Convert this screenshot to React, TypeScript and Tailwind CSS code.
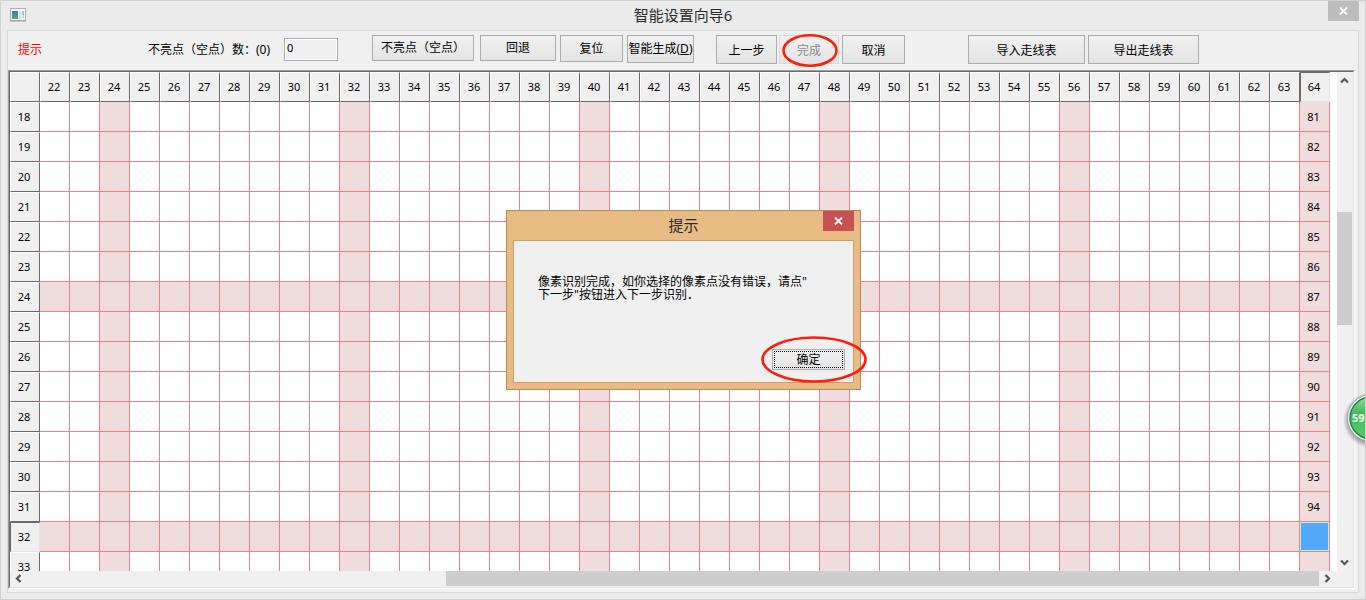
import React from "react";

const columns = Array.from({ length: 43 }, (_, i) => i + 22);
const rows = Array.from({ length: 16 }, (_, i) => i + 18);

const buttonBase =
  "shrink-0 border text-[12px] leading-4 whitespace-nowrap bg-linear-to-b from-[#f1f1f1] to-[#e4e4e4]";
const buttonOn = "border-[#acacac] text-black";

function Chevron({ d, label, className }: { d: string; label: string; className: string }) {
  return (
    <button type="button" aria-label={label} className={`flex items-center justify-center ${className}`}>
      <svg width="9" height="9" viewBox="0 0 9 9" fill="none" stroke="#555" strokeWidth="2.2">
        <path d={d} />
      </svg>
    </button>
  );
}

function WindowIcon() {
  return (
    <svg width="16" height="14" viewBox="0 0 16 14" aria-hidden="true">
      <defs>
        <linearGradient id="pane" x1="0" y1="0" x2="0" y2="1">
          <stop offset="0" stopColor="#3f7fae" />
          <stop offset="1" stopColor="#55a877" />
        </linearGradient>
      </defs>
      <rect x="0.5" y="0.5" width="15" height="12" fill="#f6f7f7" stroke="#aab2b4" />
      <rect x="0" y="12" width="16" height="1.5" fill="#9da5a7" />
      <rect x="2" y="3" width="6" height="8" fill="url(#pane)" />
      <rect x="9" y="3" width="2" height="8" fill="#dcdfe1" />
      <rect x="12" y="3" width="2" height="4" fill="#9fc0dc" />
      <rect x="12" y="7" width="2" height="3" fill="#bfe0cb" />
    </svg>
  );
}

function CloseMark() {
  return (
    <svg width="9" height="8" viewBox="0 0 9 8" stroke="#fff" strokeWidth="1.8" aria-hidden="true">
      <path d="M1 0.5L8 7.5M8 0.5L1 7.5" />
    </svg>
  );
}

function Toolbar() {
  return (
    <div className="flex h-[39px] shrink-0 items-start pt-1 pl-2.5">
      <span className="w-[130px] shrink-0 pt-[7px] text-[12px] leading-4 text-[#ff0000]">提示</span>
      <label htmlFor="dead-count" className="w-[136px] shrink-0 whitespace-nowrap pt-[7px] text-[12px] leading-4">
        不亮点（空点）数：(0)
      </label>
      <input
        id="dead-count"
        defaultValue="0"
        className="mt-[3px] h-[23px] w-[54px] shrink-0 border border-[#abadb3] bg-[#f0f0f0] px-0.5 pb-1 text-[11px] outline-1 -outline-offset-2 outline-white"
      />
      <button type="button" className={`${buttonBase} ${buttonOn} ml-[34px] h-[26px] w-[102px]`}>不亮点（空点）</button>
      <button type="button" className={`${buttonBase} ${buttonOn} ml-1.5 h-[26px] w-[76px]`}>回退</button>
      <button type="button" className={`${buttonBase} ${buttonOn} ml-1 h-[27px] w-[63px]`}>复位</button>
      <button type="button" className={`${buttonBase} ${buttonOn} ml-1 h-7 w-[67px]`}>智能生成(<u>D</u>)</button>
      <button type="button" className={`${buttonBase} ${buttonOn} ml-[22px] h-[29px] w-[61px] pt-0.5`}>上一步</button>
      <div className="relative ml-0.5 shrink-0">
        <button type="button" disabled className={`${buttonBase} h-[29px] w-[60px] border-[#dadada] pt-0.5 text-[#8a8a8a]`}>完成</button>
        <svg className="pointer-events-none absolute -top-px left-[3px]" width="57" height="34" viewBox="0 0 57 34" fill="none">
          <ellipse cx="28" cy="16.5" rx="26.5" ry="15.2" stroke="#fb1f0e" strokeWidth="2.6" />
        </svg>
      </div>
      <button type="button" className={`${buttonBase} ${buttonOn} ml-[3px] h-[29px] w-[63px] pt-0.5`}>取消</button>
      <button type="button" className={`${buttonBase} ${buttonOn} ml-[63px] h-[29px] w-[117px] pt-0.5`}>导入走线表</button>
      <button type="button" className={`${buttonBase} ${buttonOn} ml-[3px] h-[29px] w-[111px] pt-0.5`}>导出走线表</button>
    </div>
  );
}

function PixelGrid() {
  const head = "h-[30px] w-[30px] py-0 pl-0 pr-0.5 font-normal bg-[#f0f0f0]";
  const raised = "border-t border-l border-t-white border-l-white border-r border-b border-r-[#696969] border-b-[#696969]";
  const sunken = "border-t border-l border-t-[#696969] border-l-[#696969] border-r border-b border-r-[#e3e3e3] border-b-[#e3e3e3]";
  return (
    <table className="w-[1320px] table-fixed border-separate border-spacing-0 text-center text-[11px] leading-4">
      <thead>
        <tr>
          <td className={`${head} ${raised}`} />
          {columns.map((c) => (
            <th key={c} scope="col" className={`${head} ${c === 64 ? sunken : raised}`}>{c}</th>
          ))}
        </tr>
      </thead>
      <tbody>
        {rows.map((r) => (
          <tr key={r}>
            <th scope="row" className={`${head} ${r === 32 ? sunken : raised}`}>{r}</th>
            {columns.map((c) => {
              if (r === 32 && c === 64) {
                return (
                  <td key={c} className="h-[30px] border-r border-b border-[#f08080] bg-[#53a9fa] p-0 shadow-[inset_0_0_0_1px_#b4f4f0]" />
                );
              }
              const shaded = r % 8 === 0 || c % 8 === 0;
              return (
                <td key={c} className={`h-[30px] border-r border-b border-[#f08080] py-0 pl-0 pr-0.5 ${shaded ? "bg-[#f0dcdd]" : "bg-white"}`}>
                  {c === 64 && r < 32 ? r + 63 : ""}
                </td>
              );
            })}
          </tr>
        ))}
      </tbody>
    </table>
  );
}

function MessageDialog() {
  return (
    <div role="dialog" aria-labelledby="dialog-title" className="absolute top-[209px] left-1/2 -ml-[177px] flex h-[180px] w-[355px] flex-col border border-[#b18d5c] bg-[#e8bb84] px-1.5 pb-1.5">
      <div className="relative flex h-[29px] shrink-0 items-center justify-center pb-0.5">
        <h2 id="dialog-title" className="text-[15px] leading-5 text-[#2b2b2b]">提示</h2>
        <button type="button" aria-label="关闭" className="absolute top-0 right-0 flex h-5 w-[31px] items-center justify-center bg-[#c75050]">
          <CloseMark />
        </button>
      </div>
      <div className="flex flex-1 flex-col border border-[#c9a06c] bg-[#f0f0f0] pt-[34px] pr-2 pb-3 pl-6">
        <p className="text-[12px] leading-[13px]">
          像素识别完成，如你选择的像素点没有错误，请点"
          <br />
          下一步"按钮进入下一步识别．
        </p>
        <div className="relative mt-auto self-end">
          <button type="button" className="h-[21px] w-[73px] border border-[#acacac] bg-linear-to-b from-[#f1f1f1] to-[#e4e4e4] p-px text-[12px] leading-4">
            <span className="flex h-full items-center justify-center border border-dotted border-black">确定</span>
          </button>
          <svg className="pointer-events-none absolute -top-[11px] -left-3" width="108" height="48" viewBox="0 0 108 48" fill="none">
            <ellipse cx="54" cy="24.5" rx="51.5" ry="22" stroke="#fb1f0e" strokeWidth="2.6" />
          </svg>
        </div>
      </div>
    </div>
  );
}

function SpeedBadge() {
  return (
    <div className="absolute top-[388px] -right-px h-[60px] w-6 overflow-hidden">
      <svg width="60" height="60" viewBox="0 0 60 60">
        <defs>
          <linearGradient id="ball" x1="0" y1="0" x2="0" y2="1">
            <stop offset="0" stopColor="#8be09a" />
            <stop offset="0.4" stopColor="#3fba58" />
            <stop offset="1" stopColor="#4dd465" />
          </linearGradient>
          <radialGradient id="shade">
            <stop offset="0.78" stopColor="#000" stopOpacity="0.35" />
            <stop offset="1" stopColor="#000" stopOpacity="0" />
          </radialGradient>
        </defs>
        <circle cx="29" cy="31" r="28" fill="url(#shade)" />
        <circle cx="29" cy="29" r="23.5" fill="#f4f4f4" stroke="#a5a5a5" />
        <circle cx="29" cy="29" r="21" fill="url(#ball)" stroke="#178344" strokeWidth="1.4" />
        <text x="10" y="33" fill="#fff" className="text-[11px] font-bold">59</text>
      </svg>
    </div>
  );
}

export default function App() {
  return (
    <div className="relative flex h-screen min-h-[500px] flex-col overflow-hidden border border-[#d0d0d0] bg-[#ebebeb] px-1.5 pb-1.5 font-['Noto_Sans','Noto_Sans_CJK_SC',sans-serif] text-black">
      <header className="relative flex h-[29px] shrink-0 items-center justify-center pb-0.5">
        <span className="absolute top-[7px] left-[3px]"><WindowIcon /></span>
        <h1 className="text-[15px] leading-5 text-[#2b2b2b]">智能设置向导6</h1>
        <button type="button" aria-label="关闭窗口" className="absolute top-0 right-0 flex h-5 w-[31px] items-center justify-center bg-[#bcbcbc]">
          <CloseMark />
        </button>
      </header>
      <main className="flex min-h-0 flex-1 flex-col border border-[#d9d9d9] bg-[#f0f0f0] pr-[3px] pb-[3px]">
        <Toolbar />
        <section className="flex min-h-0 flex-1 flex-col border border-t-[#a0a0a0] border-r-white border-b-white border-l-[#a0a0a0]">
          <div className="flex min-h-0 flex-1 flex-col border border-t-[#696969] border-r-[#e3e3e3] border-b-[#e3e3e3] border-l-[#696969]">
            <div className="flex min-h-0 flex-1">
              <div className="min-w-0 flex-1 overflow-hidden bg-white">
                <PixelGrid />
              </div>
              <div className="flex w-4 shrink-0 flex-col items-stretch bg-[#f0f0f0] pr-px">
                <Chevron label="向上滚动" d="M1 6.5L4.5 3L8 6.5" className="h-[17px]" />
                <div className="flex flex-1 flex-col">
                  <div className="basis-[26.5%]" />
                  <div className="basis-[24.3%] bg-[#cdcdcd]" />
                </div>
                <Chevron label="向下滚动" d="M1 2.5L4.5 6L8 2.5" className="h-[17px]" />
              </div>
            </div>
            <div className="flex h-4 shrink-0 bg-[#f0f0f0] pr-[17px] pb-px">
              <Chevron label="向左滚动" d="M6.5 1L3 4.5L6.5 8" className="w-[17px]" />
              <div className="flex flex-1 justify-end">
                <div className="w-[67.6%] bg-[#cdcdcd]" />
              </div>
              <Chevron label="向右滚动" d="M2.5 1L6 4.5L2.5 8" className="w-[17px]" />
            </div>
          </div>
        </section>
      </main>
      <MessageDialog />
      <SpeedBadge />
    </div>
  );
}
